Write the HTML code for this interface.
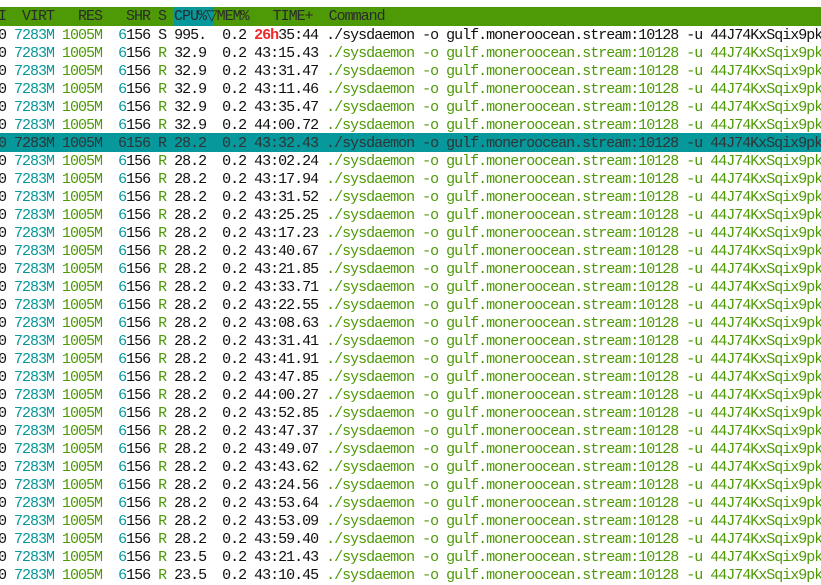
<!DOCTYPE html>
<html><head><meta charset="utf-8"><style>
html,body{margin:0;padding:0;background:#fff;width:821px;height:573px;overflow:hidden}
pre{margin:0;position:absolute;left:-2px;top:0;font-family:"Liberation Mono",monospace;font-size:15px;letter-spacing:-1px;line-height:18px;color:#101010;white-space:pre}
.h{position:absolute;left:0;top:7px;width:821px;height:19px;background:#4e9a06}
.hc{position:absolute;left:174px;top:7px;width:40px;height:19px;background:#06989a}
.hl{position:absolute;left:0;top:133px;width:821px;height:19px;background:#06989a}
.ht{position:absolute;top:7px;line-height:19px;color:#2a2a2a}
.r{position:absolute;top:27px}
.t{color:#06989a}.g{color:#4e9a06}.red{color:#ef2929;font-weight:bold}
.hr{color:#2e3436}
</style></head><body>
<div class="h"></div><div class="hc"></div><div class="hl"></div>
<pre class="ht">I  VIRT   RES   SHR S CPU%▽MEM%   TIME+  Command</pre>
<pre class="r">0 <span class=t>7283M</span> <span class=g>1005M</span>  <span class=t>6</span>156 S 995.  0.2 <span class=red>26h</span>35:44 ./sysdaemon -o gulf.moneroocean.stream:10128 -u 44J74KxSqix9pk
0 <span class=t>7283M</span> <span class=g>1005M</span>  <span class=t>6</span>156 <span class=g>R</span> 32.9  0.2 43:15.43 <span class=g>./sysdaemon -o gulf.moneroocean.stream:10128 -u 44J74KxSqix9pk</span>
0 <span class=t>7283M</span> <span class=g>1005M</span>  <span class=t>6</span>156 <span class=g>R</span> 32.9  0.2 43:31.47 <span class=g>./sysdaemon -o gulf.moneroocean.stream:10128 -u 44J74KxSqix9pk</span>
0 <span class=t>7283M</span> <span class=g>1005M</span>  <span class=t>6</span>156 <span class=g>R</span> 32.9  0.2 43:11.46 <span class=g>./sysdaemon -o gulf.moneroocean.stream:10128 -u 44J74KxSqix9pk</span>
0 <span class=t>7283M</span> <span class=g>1005M</span>  <span class=t>6</span>156 <span class=g>R</span> 32.9  0.2 43:35.47 <span class=g>./sysdaemon -o gulf.moneroocean.stream:10128 -u 44J74KxSqix9pk</span>
0 <span class=t>7283M</span> <span class=g>1005M</span>  <span class=t>6</span>156 <span class=g>R</span> 32.9  0.2 44:00.72 <span class=g>./sysdaemon -o gulf.moneroocean.stream:10128 -u 44J74KxSqix9pk</span>
<span class=hr>0 7283M 1005M  6156 R 28.2  0.2 43:32.43 ./sysdaemon -o gulf.moneroocean.stream:10128 -u 44J74KxSqix9pk</span>
0 <span class=t>7283M</span> <span class=g>1005M</span>  <span class=t>6</span>156 <span class=g>R</span> 28.2  0.2 43:02.24 <span class=g>./sysdaemon -o gulf.moneroocean.stream:10128 -u 44J74KxSqix9pk</span>
0 <span class=t>7283M</span> <span class=g>1005M</span>  <span class=t>6</span>156 <span class=g>R</span> 28.2  0.2 43:17.94 <span class=g>./sysdaemon -o gulf.moneroocean.stream:10128 -u 44J74KxSqix9pk</span>
0 <span class=t>7283M</span> <span class=g>1005M</span>  <span class=t>6</span>156 <span class=g>R</span> 28.2  0.2 43:31.52 <span class=g>./sysdaemon -o gulf.moneroocean.stream:10128 -u 44J74KxSqix9pk</span>
0 <span class=t>7283M</span> <span class=g>1005M</span>  <span class=t>6</span>156 <span class=g>R</span> 28.2  0.2 43:25.25 <span class=g>./sysdaemon -o gulf.moneroocean.stream:10128 -u 44J74KxSqix9pk</span>
0 <span class=t>7283M</span> <span class=g>1005M</span>  <span class=t>6</span>156 <span class=g>R</span> 28.2  0.2 43:17.23 <span class=g>./sysdaemon -o gulf.moneroocean.stream:10128 -u 44J74KxSqix9pk</span>
0 <span class=t>7283M</span> <span class=g>1005M</span>  <span class=t>6</span>156 <span class=g>R</span> 28.2  0.2 43:40.67 <span class=g>./sysdaemon -o gulf.moneroocean.stream:10128 -u 44J74KxSqix9pk</span>
0 <span class=t>7283M</span> <span class=g>1005M</span>  <span class=t>6</span>156 <span class=g>R</span> 28.2  0.2 43:21.85 <span class=g>./sysdaemon -o gulf.moneroocean.stream:10128 -u 44J74KxSqix9pk</span>
0 <span class=t>7283M</span> <span class=g>1005M</span>  <span class=t>6</span>156 <span class=g>R</span> 28.2  0.2 43:33.71 <span class=g>./sysdaemon -o gulf.moneroocean.stream:10128 -u 44J74KxSqix9pk</span>
0 <span class=t>7283M</span> <span class=g>1005M</span>  <span class=t>6</span>156 <span class=g>R</span> 28.2  0.2 43:22.55 <span class=g>./sysdaemon -o gulf.moneroocean.stream:10128 -u 44J74KxSqix9pk</span>
0 <span class=t>7283M</span> <span class=g>1005M</span>  <span class=t>6</span>156 <span class=g>R</span> 28.2  0.2 43:08.63 <span class=g>./sysdaemon -o gulf.moneroocean.stream:10128 -u 44J74KxSqix9pk</span>
0 <span class=t>7283M</span> <span class=g>1005M</span>  <span class=t>6</span>156 <span class=g>R</span> 28.2  0.2 43:31.41 <span class=g>./sysdaemon -o gulf.moneroocean.stream:10128 -u 44J74KxSqix9pk</span>
0 <span class=t>7283M</span> <span class=g>1005M</span>  <span class=t>6</span>156 <span class=g>R</span> 28.2  0.2 43:41.91 <span class=g>./sysdaemon -o gulf.moneroocean.stream:10128 -u 44J74KxSqix9pk</span>
0 <span class=t>7283M</span> <span class=g>1005M</span>  <span class=t>6</span>156 <span class=g>R</span> 28.2  0.2 43:47.85 <span class=g>./sysdaemon -o gulf.moneroocean.stream:10128 -u 44J74KxSqix9pk</span>
0 <span class=t>7283M</span> <span class=g>1005M</span>  <span class=t>6</span>156 <span class=g>R</span> 28.2  0.2 44:00.27 <span class=g>./sysdaemon -o gulf.moneroocean.stream:10128 -u 44J74KxSqix9pk</span>
0 <span class=t>7283M</span> <span class=g>1005M</span>  <span class=t>6</span>156 <span class=g>R</span> 28.2  0.2 43:52.85 <span class=g>./sysdaemon -o gulf.moneroocean.stream:10128 -u 44J74KxSqix9pk</span>
0 <span class=t>7283M</span> <span class=g>1005M</span>  <span class=t>6</span>156 <span class=g>R</span> 28.2  0.2 43:47.37 <span class=g>./sysdaemon -o gulf.moneroocean.stream:10128 -u 44J74KxSqix9pk</span>
0 <span class=t>7283M</span> <span class=g>1005M</span>  <span class=t>6</span>156 <span class=g>R</span> 28.2  0.2 43:49.07 <span class=g>./sysdaemon -o gulf.moneroocean.stream:10128 -u 44J74KxSqix9pk</span>
0 <span class=t>7283M</span> <span class=g>1005M</span>  <span class=t>6</span>156 <span class=g>R</span> 28.2  0.2 43:43.62 <span class=g>./sysdaemon -o gulf.moneroocean.stream:10128 -u 44J74KxSqix9pk</span>
0 <span class=t>7283M</span> <span class=g>1005M</span>  <span class=t>6</span>156 <span class=g>R</span> 28.2  0.2 43:24.56 <span class=g>./sysdaemon -o gulf.moneroocean.stream:10128 -u 44J74KxSqix9pk</span>
0 <span class=t>7283M</span> <span class=g>1005M</span>  <span class=t>6</span>156 <span class=g>R</span> 28.2  0.2 43:53.64 <span class=g>./sysdaemon -o gulf.moneroocean.stream:10128 -u 44J74KxSqix9pk</span>
0 <span class=t>7283M</span> <span class=g>1005M</span>  <span class=t>6</span>156 <span class=g>R</span> 28.2  0.2 43:53.09 <span class=g>./sysdaemon -o gulf.moneroocean.stream:10128 -u 44J74KxSqix9pk</span>
0 <span class=t>7283M</span> <span class=g>1005M</span>  <span class=t>6</span>156 <span class=g>R</span> 28.2  0.2 43:59.40 <span class=g>./sysdaemon -o gulf.moneroocean.stream:10128 -u 44J74KxSqix9pk</span>
0 <span class=t>7283M</span> <span class=g>1005M</span>  <span class=t>6</span>156 <span class=g>R</span> 23.5  0.2 43:21.43 <span class=g>./sysdaemon -o gulf.moneroocean.stream:10128 -u 44J74KxSqix9pk</span>
0 <span class=t>7283M</span> <span class=g>1005M</span>  <span class=t>6</span>156 <span class=g>R</span> 23.5  0.2 43:10.45 <span class=g>./sysdaemon -o gulf.moneroocean.stream:10128 -u 44J74KxSqix9pk</span></pre>
</body></html>
